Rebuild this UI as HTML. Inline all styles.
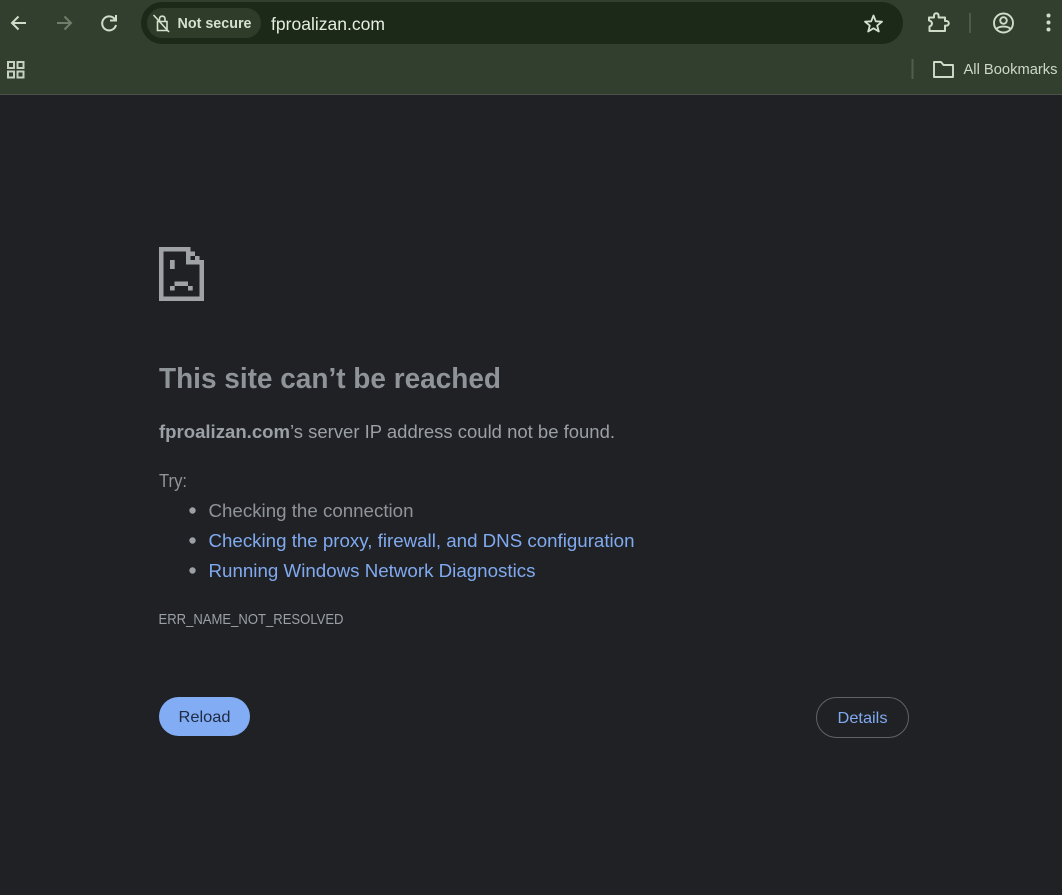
<!DOCTYPE html>
<html lang="en">
<head>
<meta charset="utf-8">
<title>fproalizan.com</title>
<style>
html,body{margin:0;padding:0;width:1062px;height:895px;overflow:hidden;background:#202124}
svg{display:block;position:absolute;left:0;top:0}
text{font-family:"Liberation Sans",sans-serif}
</style>
</head>
<body>
<svg width="1062" height="895" viewBox="0 0 1062 895" xmlns="http://www.w3.org/2000/svg">
  <rect width="1062" height="895" fill="#202124"/>
  <rect width="1062" height="94" fill="#333f2e"/>
  <rect y="94" width="1062" height="1" fill="#4b5249"/>

  <!-- nav -->
  <g fill="none" stroke="#cfdcc8" stroke-width="2">
    <path d="M26 23H12M18.500 16.500L12 23L18.500 29.500"/>
    <path d="M71 23H57M64.500 16.500L71 23L64.500 29.500" stroke="#6f7d69"/>
    <path d="M115 19.500A7 7 0 1 0 116 25"/>
    <path d="M110 20.500H116V15"/>
  </g>

  <!-- omnibox -->
  <rect x="141" y="2" width="762" height="42" rx="21" fill="#1c2918"/>
  <rect x="147" y="8" width="114" height="30" rx="15" fill="#2f3c2a"/>
  <g fill="none" stroke="#d5e1cf" stroke-width="1.600">
    <path d="M157.500 21.500H167V30.500H157.500Z"/>
    <path d="M159.500 21.500V18.500A2.800 2.800 0 0 1 165 18.500V21.500"/>
    <path d="M153.500 15L169 32"/>
  </g>
  <text x="177.500" y="28" font-size="14.500" font-weight="700" fill="#d5e1cf" textLength="74" lengthAdjust="spacingAndGlyphs">Not secure</text>
  <text x="271" y="30" font-size="17.500" fill="#e6ece2" textLength="114" lengthAdjust="spacingAndGlyphs">fproalizan.com</text>
  <path d="M873.500 15.500L875.800 21.300L882 21.700L877.200 25.600L878.800 31.500L873.500 28.300L868.200 31.500L869.800 25.600L865 21.700L871.200 21.300Z" fill="none" stroke="#d5e1cf" stroke-width="1.800" stroke-linejoin="round"/>

  <!-- extension -->
  <path d="M929 17.500H934V15.500A2.300 2.300 0 0 1 938.600 15.500V17.500H945V21H946.500A2.300 2.300 0 0 1 946.500 25.600H945V31H929.500V26.500A3.500 3.500 0 0 0 932 23.500A3.500 3.500 0 0 0 929 20.500Z" fill="none" stroke="#cfdcc8" stroke-width="2" stroke-linejoin="round"/>
  <rect x="969" y="13" width="2" height="20" fill="#4d5a47"/>

  <!-- profile -->
  <g fill="none" stroke="#cfdcc8" stroke-width="1.900">
    <circle cx="1003.500" cy="23" r="9.500"/>
    <circle cx="1003.500" cy="20.500" r="3.300"/>
    <path d="M996.500 29C999 25.800 1008 25.800 1010.500 29"/>
  </g>
  <g fill="#cfdcc8">
    <circle cx="1048.500" cy="15.500" r="2"/>
    <circle cx="1048.500" cy="22.500" r="2"/>
    <circle cx="1048.500" cy="29.500" r="2"/>
  </g>

  <!-- bookmarks row -->
  <g fill="none" stroke="#c6d2bf" stroke-width="2">
    <rect x="8" y="62" width="6" height="6"/>
    <rect x="17.500" y="62" width="6" height="6"/>
    <rect x="8" y="71.500" width="6" height="6"/>
    <rect x="17.500" y="71.500" width="6" height="6"/>
  </g>
  <rect x="911.500" y="59" width="2" height="20" fill="#515e4b"/>
  <path d="M934 62H941L943.500 65H953V77H934Z" fill="none" stroke="#cfdcc8" stroke-width="1.900" stroke-linejoin="round"/>
  <text x="963.500" y="74" font-size="14.500" fill="#cdd8c7" textLength="94" lengthAdjust="spacingAndGlyphs">All Bookmarks</text>

  <!-- sad page icon -->
  <g fill="#a0a3a6">
    <rect x="159" y="247" width="31.500" height="4.500"/>
    <rect x="159" y="247" width="4.500" height="54"/>
    <rect x="159" y="296.500" width="45" height="4.500"/>
    <rect x="199.500" y="260" width="4.500" height="41"/>
    <rect x="186" y="260" width="18" height="4.500"/>
    <rect x="186" y="247" width="4.500" height="17.500"/>
    <rect x="190.500" y="251.500" width="4.500" height="4.500"/>
    <rect x="195" y="256" width="4.500" height="4.500"/>
    <rect x="170" y="260" width="4.700" height="9"/>
    <rect x="170" y="286" width="4.700" height="4.500"/>
    <rect x="174.500" y="281.500" width="13.500" height="4.500"/>
    <rect x="188" y="286" width="4.700" height="4.500"/>
  </g>

  <!-- error text -->
  <text x="159" y="388" font-size="29" font-weight="700" fill="#8f9498" textLength="342" lengthAdjust="spacingAndGlyphs">This site can’t be reached</text>
  <text x="159" y="438" font-size="18.500" font-weight="700" fill="#9aa0a6" textLength="131" lengthAdjust="spacingAndGlyphs">fproalizan.com</text>
  <text x="290" y="438" font-size="18.500" fill="#9aa0a6" textLength="325" lengthAdjust="spacingAndGlyphs">’s server IP address could not be found.</text>
  <text x="159" y="487" font-size="18.500" fill="#8f9498" textLength="28" lengthAdjust="spacingAndGlyphs">Try:</text>

  <circle cx="192.500" cy="510.500" r="3.200" fill="#9aa0a6"/>
  <circle cx="192.500" cy="540.500" r="3.200" fill="#9aa0a6"/>
  <circle cx="192.500" cy="570.500" r="3.200" fill="#9aa0a6"/>
  <text x="208.500" y="517" font-size="18.500" fill="#8f9498" textLength="205" lengthAdjust="spacingAndGlyphs">Checking the connection</text>
  <text x="208.500" y="547" font-size="18.500" fill="#80aaf0" textLength="426" lengthAdjust="spacingAndGlyphs">Checking the proxy, firewall, and DNS configuration</text>
  <text x="208.500" y="577" font-size="18.500" fill="#80aaf0" textLength="327" lengthAdjust="spacingAndGlyphs">Running Windows Network Diagnostics</text>
  <text x="158.500" y="624" font-size="14.800" fill="#9aa0a6" textLength="185" lengthAdjust="spacingAndGlyphs">ERR_NAME_NOT_RESOLVED</text>

  <!-- buttons -->
  <rect x="159" y="697" width="91" height="39" rx="19.500" fill="#82adf5"/>
  <text x="178.500" y="722" font-size="16" fill="#202b44" textLength="52" lengthAdjust="spacingAndGlyphs">Reload</text>
  <rect x="816.500" y="697.500" width="92" height="40" rx="20" fill="none" stroke="#5f6368" stroke-width="1"/>
  <text x="837.500" y="723" font-size="16" fill="#80aaf0" textLength="50" lengthAdjust="spacingAndGlyphs">Details</text>
</svg>
</body>
</html>
